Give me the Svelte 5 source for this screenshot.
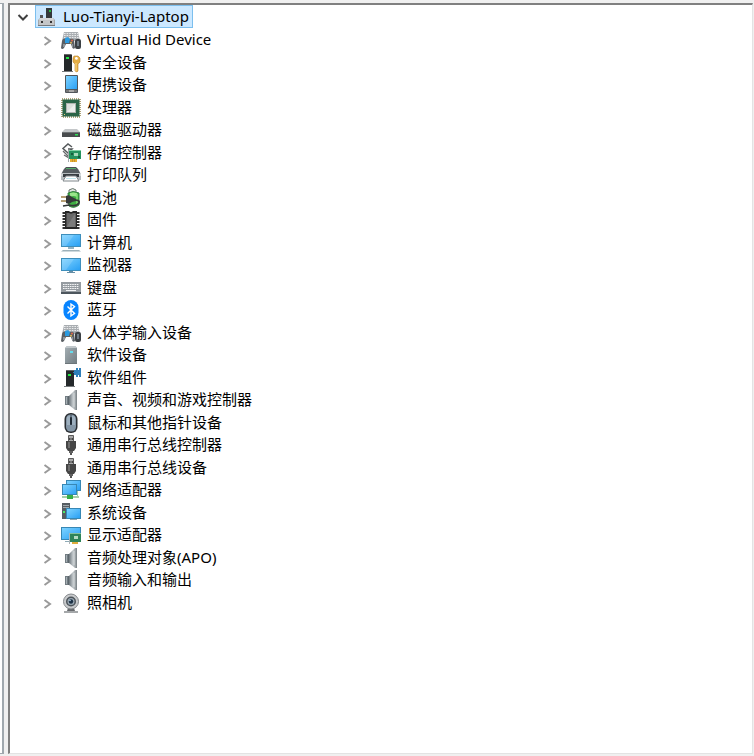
<script lang="ts">
    interface Device {
        name: string;
        icon: string;
    }

    const root = "Luo-Tianyi-Laptop";

    const devices: Device[] = [
        { name: "Virtual Hid Device", icon: "hid" },
        { name: "安全设备", icon: "security" },
        { name: "便携设备", icon: "portable" },
        { name: "处理器", icon: "cpu" },
        { name: "磁盘驱动器", icon: "disk" },
        { name: "存储控制器", icon: "storage" },
        { name: "打印队列", icon: "printer" },
        { name: "电池", icon: "battery" },
        { name: "固件", icon: "firmware" },
        { name: "计算机", icon: "computer" },
        { name: "监视器", icon: "monitor" },
        { name: "键盘", icon: "keyboard" },
        { name: "蓝牙", icon: "bluetooth" },
        { name: "人体学输入设备", icon: "hid" },
        { name: "软件设备", icon: "software" },
        { name: "软件组件", icon: "component" },
        { name: "声音、视频和游戏控制器", icon: "speaker" },
        { name: "鼠标和其他指针设备", icon: "mouse" },
        { name: "通用串行总线控制器", icon: "usb" },
        { name: "通用串行总线设备", icon: "usb" },
        { name: "网络适配器", icon: "network" },
        { name: "系统设备", icon: "system" },
        { name: "显示适配器", icon: "display" },
        { name: "音频处理对象(APO)", icon: "speaker" },
        { name: "音频输入和输出", icon: "speaker" },
        { name: "照相机", icon: "camera" },
    ];

    let rootOpen: boolean = $state(true);
    let open: boolean[] = $state(devices.map(() => false));
    let selected: number = $state(-1);
</script>

<svg class="defs" aria-hidden="true">
    <defs>
        <linearGradient id="screen" x1="0" y1="0" x2="1" y2="1">
            <stop offset="0" stop-color="#7dd2ff" />
            <stop offset="1" stop-color="#2aa0f4" />
        </linearGradient>
        <linearGradient id="metal" x1="0" y1="0" x2="1" y2="0">
            <stop offset="0" stop-color="#6d767c" />
            <stop offset="0.5" stop-color="#c3c9cc" />
            <stop offset="1" stop-color="#858c90" />
        </linearGradient>
        <linearGradient id="box" x1="0" y1="0" x2="1" y2="1">
            <stop offset="0" stop-color="#a6b0b5" />
            <stop offset="1" stop-color="#727d82" />
        </linearGradient>
    </defs>
</svg>

{#snippet chevron(expanded: boolean)}
    <svg class="chevron" class:expanded viewBox="0 0 12 12" aria-hidden="true">
        {#if expanded}
            <path d="M1.5 4 6 8.5 10.5 4" />
        {:else}
            <path d="M3.5 2 9 6 3.5 10" />
        {/if}
    </svg>
{/snippet}

{#snippet glyph(icon: string)}
    <svg class="icon" viewBox="0 0 20 20" aria-hidden="true">
        {#if icon === "root"}
            <path d="M9 1h6v11H9z" fill="#34393b" />
            <path d="M12 3h2v2h-2z" fill="#27b844" />
            <path d="M3 8h3v3H3z" fill="#555" />
            <path d="M3 11h13l2 2v5H1v-5z" fill="#a4a6a8" />
            <path d="M3 11h13l1 2H2z" fill="#d5d6d7" />
            <path d="M2 13h15v5H2z" fill="#c4c6c8" />
            <path d="M4 14h2v2H4zM13 14h2v2h-2z" fill="#333" />
            <path d="M1 18h17v1H1z" fill="#77797b" />
        {:else if icon === "hid"}
            <path d="M3 2h14l2 9H1z" fill="#a9adb1" />
            <path
                d="M3 3.5h14M3 5.5h15M3 7.5h15"
                stroke="#e8eaec"
                stroke-dasharray="1.6 1"
            />
            <path
                d="M2 9q2-1 4 0h3q3-1 4 1l1 8q-2 2-3-1l-1-3H5l-2 4q-2 2-3 0l1-7z"
                fill="#5a5f64"
            />
            <path d="m4 8 3-1 2 2-1 4H4z" fill="#2c9be0" />
            <circle cx="11" cy="10.5" r="1.1" fill="#d9694f" />
            <circle cx="10" cy="12.7" r="1" fill="#dcb75a" />
            <path d="M2 14h2v3H2zM11 14h1v3h-1z" fill="#8e969c" />
            <rect x="14" y="9" width="6" height="10" rx="2" fill="#3b4044" />
            <path d="M17 11v5" stroke="#8897a4" stroke-width="1.4" />
        {:else if icon === "security"}
            <path d="M3 1h7l1 1v16H3z" fill="#25282a" />
            <path d="M3 1h7v1H3z" fill="#666" />
            <path d="M1 18h11v1H1z" fill="#75797b" />
            <path d="M5 4h3v2H5z" fill="#23e745" />
            <path
                d="M13 3h4l2 2v4l-2 2v7l-1 1-2-1v-7l-2-2V5z"
                fill="#e5ae45"
                stroke="#b98330"
                stroke-width=".6"
            />
            <circle cx="15.4" cy="5.4" r="1.4" fill="#fff" />
            <path d="M15 10v8" stroke="#ffd985" />
        {:else if icon === "portable"}
            <rect x="4" y="0" width="13" height="18" rx="1" fill="#50565b" />
            <path d="M5 1h11v13H5z" fill="url(#screen)" />
            <path d="M5 15h11v2H5z" fill="#777" />
            <path d="M8 16h5" stroke="#ddd" />
        {:else if icon === "cpu"}
            <rect
                x="1"
                y="1"
                width="18"
                height="18"
                fill="none"
                stroke="#988b55"
                stroke-width="1.6"
                stroke-dasharray="1 1"
            />
            <path d="M1.5 1.5h17v17h-17z" fill="#2b6548" />
            <path d="M5 5h10v10H5z" fill="#b0b5b1" />
            <path d="M6 6h8v8H6z" fill="#dde0dd" />
            <path d="M6 14 14 6v8z" fill="#edefed" />
            <path d="m3 16 1 1" stroke="#e4cc7d" />
        {:else if icon === "disk"}
            <path d="M4 9h12l3 3H1z" fill="#c4c7c9" />
            <path d="M1 12h18v5H1z" fill="#484b4d" />
            <path d="M1 12.5h18" stroke="#6f7375" />
            <path d="M14 14h3v1.5h-3z" fill="#2fdd55" />
        {:else if icon === "storage"}
            <path
                d="M11 4 7 1 2 5.500 7 10l4-4H7"
                fill="#fff"
                stroke="#55595b"
                stroke-width="1.5"
            />
            <path d="m2 8 5 5M3 12l5 3" fill="none" stroke="#66696b" stroke-width="1.3" />
            <path d="M8 7h12v9H8z" fill="#25935e" />
            <path d="M8 7.5h12" stroke="#7fcfa3" />
            <path d="M13 10h4v3h-4z" fill="#a4d8b7" />
            <path d="M10 10h2v2h-2zM17 13h2v2h-2z" fill="#175c3c" />
            <path d="M7.500 7v12" stroke="#a5aaac" />
            <path d="M9 16h7v3H9z" fill="#e8ae34" />
            <path d="M11.500 16v3M13.500 16v3" stroke="#a4761f" stroke-width=".5" />
        {:else if icon === "printer"}
            <path d="M5 2h10l2 2H3z" fill="#4a5054" />
            <path d="M3 4h14l3 5v6H0V9z" fill="#b5bbbe" />
            <path d="M3 4h14l2 4H1z" fill="#555c60" />
            <path d="M5 3.500h10" stroke="#56aa6a" />
            <path d="M0 9h20v2H0z" fill="#d4d8da" />
            <path d="M2 9h16v3H2z" fill="#373d41" />
            <path d="M5 11h10l3 5H2z" fill="#fff" stroke="#7e8589" />
            <path d="M5 13.500h10" stroke="#c2e8ef" />
        {:else if icon === "battery"}
            <path d="M8 4V2q4-3 7 0v3" fill="#dfe5e0" stroke="#66736a" />
            <path d="M7 5q5-3 11 0v12q-5 4-10 1z" fill="#3faf43" stroke="#2f783b" />
            <path d="M9 5q3-1 7 0v4q-4-2-7 0z" fill="#9be58b" />
            <path d="M16 6v11" stroke="#80dc70" stroke-width="1.5" />
            <path d="M5 8q3-2 6 1l4 2v2l-4 1q-3 3-6 1z" fill="#363939" />
            <path d="M0 9h5M0 13h5" stroke="#9e8048" stroke-width="1.5" />
            <path
                d="M14 12q5 0 4 3-3 4-10 2l-6 1"
                fill="none"
                stroke="#333736"
                stroke-width="1.7"
            />
        {:else if icon === "firmware"}
            <path
                d="M3 2v17M17 2v17"
                stroke="#303030"
                stroke-width="3"
                stroke-dasharray="2 1"
            />
            <path d="M4 1h4q2 2 4 0h4v18H4z" fill="#262626" />
            <path d="M5.500 3H8q2 1.500 4 0h2.500v14h-9z" fill="#686868" />
            <path d="M14.500 3v14h-9z" fill="#7b7b7b" />
        {:else if icon === "computer"}
            <path d="M0 1h20v13H0z" fill="#3e8ebb" />
            <path d="M1 2h18v11H1z" fill="url(#screen)" />
            <path d="m1 2 12 0L5 13H1z" fill="#fff" opacity=".15" />
            <path d="M7 14h6v2H7z" fill="#94b3c3" />
            <path d="M2 17h16l2 1.500H0z" fill="#9db1ba" />
        {:else if icon === "monitor"}
            <path d="M0 3h20v13H0z" fill="#3e8ebb" />
            <path d="M1 4h18v11H1z" fill="url(#screen)" />
            <path d="m1 4 12 0-8 11H1z" fill="#fff" opacity=".15" />
            <path d="M8 16h4v1h2v1H6v-1h2z" fill="#668fa6" />
        {:else if icon === "keyboard"}
            <path d="M0 4h20v10H0z" fill="#969ca1" />
            <path d="M0 14h20v2H0z" fill="#4d565d" />
            <path
                d="M2 6.500h16M2 8.500h16M2 10.500h16"
                stroke="#f5f6f7"
                stroke-dasharray="1.6 .7"
            />
            <path d="M5 12.500h10" stroke="#f5f6f7" />
        {:else if icon === "bluetooth"}
            <rect x="2.5" y="0" width="15" height="20" rx="7.5" fill="#0784ff" />
            <path
                d="m6.500 6.500 7 7L10 16V4l3.500 2.500-7 7"
                fill="none"
                stroke="#fff"
                stroke-width="1.4"
            />
        {:else if icon === "software"}
            <path d="M6 1h8l2 2v15H4V3z" fill="url(#box)" />
            <path d="M6 1h8l2 2H4z" fill="#c1c8cb" />
            <path d="M9 6h3v2H9z" fill="#65dced" />
            <path d="M4 18h12v1H4z" fill="#6c7579" />
        {:else if icon === "component"}
            <path d="M5 2h8v16H5z" fill="#25292b" />
            <path d="M5 2h8v1H5z" fill="#606466" />
            <path d="M3 18h11v1H3z" fill="#777b7d" />
            <path d="M7 6h3v2H7z" fill="#24e943" />
            <path
                d="M13 2h2V0h2v2h1V0h2v9h-2V7h-1v2h-2V7h-2V5h-1V4h1z"
                fill="#2f80bb"
            />
        {:else if icon === "speaker"}
            <path d="M4 6h5v9H4z" fill="#727c82" />
            <path d="M8 6 14 0h2v20h-2l-6-5z" fill="url(#metal)" />
            <path d="M5.500 7v7" stroke="#a6afb4" />
            <path d="M7.500 6v9" stroke="#5c666c" />
            <path d="M13 3v14" stroke="#d5d9db" />
            <path d="M15.500 0v20" stroke="#82898d" />
        {:else if icon === "mouse"}
            <rect x="3.500" y="0" width="13" height="20" rx="6" fill="#2a2e32" />
            <rect x="5" y="1.500" width="10" height="17" rx="4.500" fill="#8496a6" />
            <path d="M6 4q4-3 8 0v8H6z" fill="#9eb0bf" />
            <path d="M10 2v10" stroke="#35434f" />
            <rect x="9" y="4" width="2" height="8" rx="1" fill="#202a34" />
        {:else if icon === "usb"}
            <path d="M7.500 .5h5V7h-5z" fill="#a9a9a9" stroke="#5b5b5b" />
            <path d="M8 3h1.500v2H8zM10.500 3H12v2h-1.500z" fill="#444" />
            <path d="M5 6h10v7l-2 3H7l-2-3z" fill="#464646" />
            <path d="M7 7h2v6H7z" fill="#6e6e6e" />
            <path d="M8 16h4v2H8z" fill="#616161" />
            <path d="M10 18v2" stroke="#555" stroke-width="2" />
        {:else if icon === "network"}
            <path d="M5 0h15v11H5z" fill="#3787b4" />
            <path d="M6 1h13v9H6z" fill="url(#screen)" />
            <path d="M1 4h15v11H1z" fill="#3787b4" />
            <path d="M2 5h13v9H2z" fill="url(#screen)" />
            <path d="M1 16h17v2H1z" fill="#a5cfa9" />
            <path d="M6 15h6v4H6z" fill="#35ad49" />
            <path d="M16 11h1v5h-1z" fill="#9acda8" />
        {:else if icon === "system"}
            <path d="M1 0h8v16H1z" fill="#565d62" />
            <path d="M2 2.500h6M2 4.500h6" stroke="#a0a8ad" />
            <path d="M2 8h2v2H2z" fill="#4ae866" />
            <path d="M5 5h15v11H5z" fill="#3787b4" />
            <path d="M6 6h13v9H6z" fill="url(#screen)" />
            <path d="M9 16h7v1H9z" fill="#8fa7b2" />
        {:else if icon === "display"}
            <path d="M0 2h20v13H0z" fill="#3787b4" />
            <path d="M1 3h18v11H1z" fill="url(#screen)" />
            <path d="M4 16h5v1H4z" fill="#8faab6" />
            <path d="M9 8h11v9H9z" fill="#2e8459" />
            <path d="M9 8.500h11" stroke="#83bf9c" />
            <path d="M13 11h4v3h-4z" fill="#b6dbc2" />
            <path d="M8.500 8v11" stroke="#abb3b6" />
            <path d="M11 17h6v2h-6z" fill="#deac3d" />
        {:else if icon === "camera"}
            <path d="M7 15h6l1 3H6z" fill="#686b6e" />
            <path d="M3 18h14v2H3z" fill="#a5a8aa" />
            <circle cx="10" cy="8.500" r="7.500" fill="#c8cacc" stroke="#85898c" />
            <circle cx="10" cy="8.500" r="5" fill="#4c5359" />
            <circle cx="10" cy="8.500" r="3.500" fill="#9aa8b3" />
            <circle cx="10" cy="8.500" r="2.200" fill="#1b3044" />
            <circle cx="9" cy="7.500" r=".8" fill="#b8d6ec" />
        {/if}
    </svg>
{/snippet}

<main>
    <div class="sidebar"></div>
    <section class="panel">
        <div class="row root">
            <button
                aria-label={root}
                aria-expanded={rootOpen}
                onclick={() => (rootOpen = !rootOpen)}
            >
                {@render chevron(rootOpen)}
            </button>
            <span class="item current">
                {@render glyph("root")}
                <span class="label">{root}</span>
            </span>
        </div>
        {#if rootOpen}
            <ul>
                {#each devices as device, i}
                    <li class="row">
                        <button
                            aria-label={device.name}
                            aria-expanded={open[i]}
                            onclick={() => (open[i] = !open[i])}
                        >
                            {@render chevron(open[i])}
                        </button>
                        <!-- svelte-ignore a11y_click_events_have_key_events, a11y_no_static_element_interactions -->
                        <span
                            class="item"
                            class:selected={selected === i}
                            onclick={() => (selected = i)}
                        >
                            {@render glyph(device.icon)}
                            <span class="label">{device.name}</span>
                        </span>
                    </li>
                {/each}
            </ul>
        {/if}
    </section>
</main>

<style>
    :global(body) {
        margin: 0;
        background: #f0f0f0;
    }

    .defs {
        position: absolute;
        width: 0;
        height: 0;
    }

    main {
        box-sizing: border-box;
        display: flex;
        gap: 4px;
        min-height: 100vh;
        padding: 3px 1px 2px 0;
        font-family: "Noto Sans", "Noto Sans CJK SC", sans-serif;
        font-size: 15px;
        line-height: 20px;
        color: #000;
    }

    .sidebar {
        box-sizing: border-box;
        width: 4px;
        border-top: 1px solid #a0a8ae;
        border-right: 2px solid #a0a8ae;
        border-bottom: 1px solid #a0a8ae;
        background: #fff;
    }

    .panel {
        flex: 1;
        border: 1px solid #e3e3e3;
        border-top: 2px solid #808080;
        border-left: 2px solid #808080;
        background: #fff;
    }

    ul {
        list-style: none;
        margin: 0;
        padding: 0 0 0 24px;
    }

    .row {
        display: flex;
        align-items: center;
        height: 22px;
    }

    .row.root {
        height: 24px;
        align-items: flex-start;
    }

    li:nth-child(even) {
        height: 23px;
    }

    button {
        display: flex;
        align-items: center;
        justify-content: center;
        width: 25px;
        height: 22px;
        padding: 2px 0 0;
        border: 0;
        background: none;
    }

    .chevron {
        width: 12px;
        height: 12px;
        fill: none;
        stroke: #9a9a9a;
        stroke-width: 2;
    }

    .chevron.expanded {
        stroke: #404040;
    }

    .item {
        display: flex;
        align-items: center;
        gap: 6px;
        padding-left: 2px;
        white-space: nowrap;
        cursor: default;
    }

    .item.current {
        box-sizing: border-box;
        height: 23px;
        padding: 0 3px 0 1px;
        border: 1px solid #7cbfee;
        background: #cce8ff;
    }

    .item.selected {
        background: #cce8ff;
    }

    .label {
        padding-bottom: 2px;
    }

    .icon {
        width: 20px;
        height: 20px;
        flex: none;
    }
</style>
